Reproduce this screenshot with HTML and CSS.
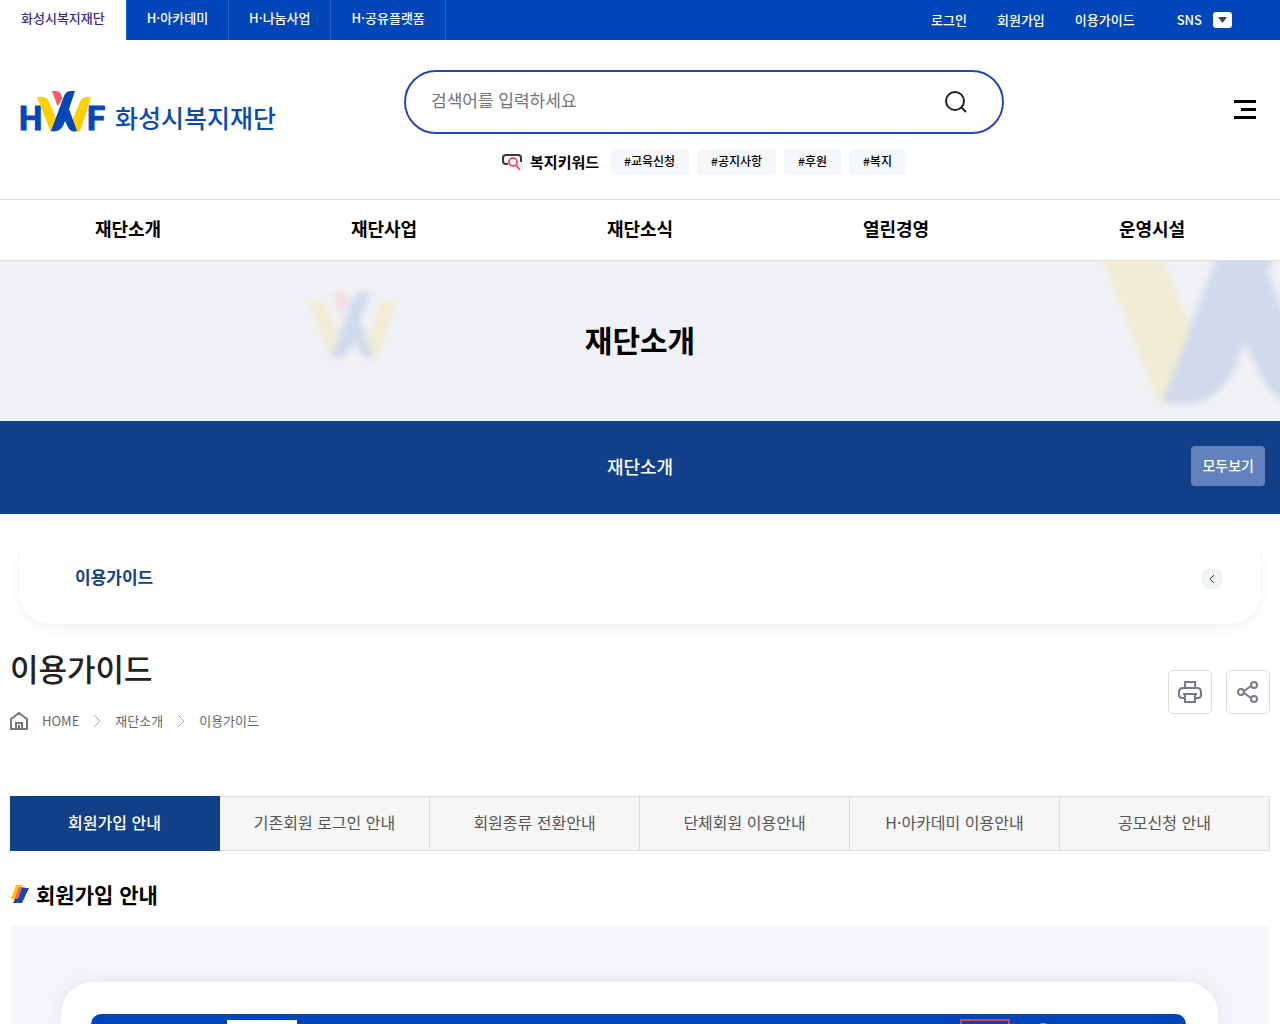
FILE: index.html
```
<!DOCTYPE html>
<html lang="ko">
<head>
    <meta charset="utf-8">
    <meta name="viewport" content="width=device-width, initial-scale=1">
    <title>이용가이드 | 화성시복지재단</title>
    <link rel="stylesheet" href="styles.css">
</head>
<body>
    <svg class="defs" aria-hidden="true">
        <symbol id="wing" viewBox="0 0 55 41">
            <path fill="#ffcf00" d="M0 6h5q5 0 7 5l8 19-5 11q-2-1-3-4z"/>
            <path fill="#ffcf00" d="M54 6h-4q-5 0-7 5l-8 19 5 11q3 0 4-3z"/>
            <path fill="#ff5a64" d="M15 0h4q5 0 6 6v2l-4 7q-1-1-2-4z"/>
            <path fill="#0546b8" d="M38 0h-4q-5 0-7 5L14 40q8 2 12-5l2-5 3 6q3 6 9 4L32 18z"/>
        </symbol>
    </svg>

    <div class="topbar">
        <nav class="sites">
            <a class="on" href="#">화성시복지재단</a>
            <a href="#">H·아카데미</a>
            <a href="#">H·나눔사업</a>
            <a href="#">H·공유플랫폼</a>
        </nav>
        <div class="member">
            <a href="#">로그인</a>
            <a href="#">회원가입</a>
            <a href="#">이용가이드</a>
            <button class="sns" type="button">SNS
                <svg width="19" height="16" viewBox="0 0 19 16"><rect width="19" height="16" rx="3" fill="#fff"/><path d="M5 5h9l-4.500 6z" fill="#444"/></svg>
            </button>
        </div>
    </div>

    <header class="header">
        <a class="logo" href="#">
            <svg width="86" height="54" viewBox="0 0 86 54" aria-label="HWF">
                <text class="logo-letter" x="-1" y="40">H</text>
                <text class="logo-letter" x="67" y="40">F</text>
                <use href="#wing" x="17" y="1" width="55" height="41"/>
            </svg>
            <span>화성시복지재단</span>
        </a>
        <div class="search">
            <form class="search-box">
                <input type="text" aria-label="검색어" placeholder="검색어를 입력하세요">
                <button type="button" aria-label="검색">
                    <svg width="24" height="24" viewBox="0 0 24 24" fill="none" stroke="#222" stroke-width="2"><circle cx="11" cy="11" r="9"/><path d="M17 17l5 5"/></svg>
                </button>
            </form>
            <div class="keywords">
                <svg width="20" height="18" viewBox="0 0 20 18" fill="none" stroke-width="2"><path stroke="#333846" d="M6 11H4q-3 0-3-3V5q0-3 3-3h12q3 0 3 3v4"/><circle cx="11" cy="9" r="4" stroke="#f0545c"/><path stroke="#f0545c" d="M14 12l4 5"/></svg>
                <strong>복지키워드</strong>
                <a href="#">#교육신청</a>
                <a href="#">#공지사항</a>
                <a href="#">#후원</a>
                <a href="#">#복지</a>
            </div>
        </div>
        <button class="menu" type="button" aria-label="전체메뉴">
            <svg width="22" height="20" viewBox="0 0 22 20"><path d="M0 1.500h22M7 9.500h15M0 17.500h22" stroke="#000" stroke-width="3"/></svg>
        </button>
    </header>

    <nav class="gnb">
        <a href="#">재단소개</a>
        <a href="#">재단사업</a>
        <a href="#">재단소식</a>
        <a href="#">열린경영</a>
        <a href="#">운영시설</a>
    </nav>

    <section class="visual">
        <svg class="mark-small" aria-hidden="true"><use href="#wing"/></svg>
        <svg class="mark-large" aria-hidden="true"><use href="#wing"/></svg>
        <h1>재단소개</h1>
    </section>

    <div class="depth">
        <span></span>
        <a href="#">재단소개</a>
        <button type="button">모두보기</button>
    </div>

    <main class="content">
        <div class="side-menu">
            <a href="#">이용가이드</a>
            <button type="button" aria-label="하위메뉴">
                <svg width="6" height="8" viewBox="0 0 6 8" fill="none" stroke="#444"><path d="M5 0L1 4l4 4"/></svg>
            </button>
        </div>

        <div class="title-row">
            <div>
                <h2>이용가이드</h2>
                <nav class="breadcrumb">
                    <svg width="18" height="18" viewBox="0 0 18 18" fill="none" stroke="#777" stroke-width="2"><path d="M1 17V7l8-6 8 6v10zM6 17v-6h6v6M9 13v4"/></svg>
                    <a href="#">HOME</a>
                    <svg width="8" height="14" viewBox="0 0 8 14" fill="none" stroke="#aaa"><path d="M1 1l6 6-6 6"/></svg>
                    <a href="#">재단소개</a>
                    <svg width="8" height="14" viewBox="0 0 8 14" fill="none" stroke="#aaa"><path d="M1 1l6 6-6 6"/></svg>
                    <a href="#">이용가이드</a>
                </nav>
            </div>
            <div class="tools">
                <button type="button" aria-label="인쇄">
                    <svg width="24" height="24" viewBox="0 0 24 24" fill="none" stroke="#747b8a" stroke-width="2"><path d="M7 8V2h10v6M6 18H4q-3 0-3-3v-3q0-4 4-4h14q4 0 4 4v3q0 3-3 3h-2M5 14h14M7 14v8h10v-8"/></svg>
                </button>
                <button type="button" aria-label="공유">
                    <svg width="24" height="24" viewBox="0 0 24 24" fill="none" stroke="#747b8a" stroke-width="2"><circle cx="5" cy="12" r="3"/><circle cx="18" cy="5" r="3"/><circle cx="18" cy="19" r="3"/><path d="M8 11l7-5M8 13l7 5"/></svg>
                </button>
            </div>
        </div>

        <nav class="tabs">
            <a class="on" href="#">회원가입 안내</a>
            <a href="#">기존회원 로그인 안내</a>
            <a href="#">회원종류 전환안내</a>
            <a href="#">단체회원 이용안내</a>
            <a href="#">H·아카데미 이용안내</a>
            <a href="#">공모신청 안내</a>
        </nav>

        <h3>
            <svg width="18" height="18" viewBox="0 0 18 18"><path d="M5 0h7L7 14H0z" fill="#ffc400"/><path d="M8 2h6L8 15H3z" fill="#f4645c"/><path d="M11 3h7l-7 15H2l2-4h3z" fill="#1746b4"/></svg>
            회원가입 안내
        </h3>

        <div class="guide">
            <div class="guide-card">
                <div class="guide-bar">
                    <span class="guide-tab"></span>
                    <span class="guide-point"></span>
                    <span class="guide-dot"></span>
                </div>
            </div>
        </div>
    </main>
</body>
</html>
```
FILE: styles.css
```
* {
    box-sizing: border-box;
}

body {
    margin: 0;
    min-height: 100vh;
    display: flex;
    flex-direction: column;
    background: #fff;
    color: #000;
    font-family: "Noto Sans CJK KR", sans-serif;
    font-size: 13px;
    line-height: 20px;
}

a {
    color: inherit;
    text-decoration: none;
}

button {
    padding: 0;
    border: 0;
    background: none;
    color: inherit;
    font: inherit;
    cursor: pointer;
}

svg {
    display: block;
    flex-shrink: 0;
}

h1, h2, h3 {
    margin: 0;
}

.defs {
    position: absolute;
    width: 0;
    height: 0;
}

/* top bar */
.topbar {
    display: flex;
    justify-content: space-between;
    height: 40px;
    background: #0046b8;
    color: #fff;
    font-weight: 500;
}

.sites {
    display: flex;
}

.sites a {
    padding: 8px 20px 0;
    border-right: 1px solid #2460c4;
}

.sites .on {
    padding-left: 21px;
    padding-right: 21px;
    background: #fff;
    color: #3c2a86;
}

.member {
    display: flex;
    align-items: center;
    gap: 30px;
    padding-right: 48px;
}

.sns {
    display: flex;
    align-items: center;
    gap: 11px;
    margin-left: 12px;
}

/* header */
.header {
    display: grid;
    grid-template-columns: 374px 600px 1fr;
    height: 159px;
    padding: 30px 24px 0 20px;
    column-gap: 10px;
}

.logo {
    display: flex;
    align-items: flex-start;
    gap: 9px;
    padding-top: 20px;
    color: #0b4bb0;
    font-size: 25px;
    font-weight: 500;
    line-height: 54px;
}

.logo-letter {
    fill: #0546b8;
    stroke: #0546b8;
    stroke-linejoin: round;
    font: bold 33px Roboto, sans-serif;
}

.search-box {
    display: flex;
    align-items: center;
    height: 64px;
    padding: 0 34px 0 25px;
    border: 2px solid #2447b5;
    border-radius: 32px;
}

.search-box input {
    flex: 1;
    padding: 0 0 4px;
    border: 0;
    outline: 0;
    background: none;
    font: inherit;
    font-size: 17px;
}

.search-box input::placeholder {
    color: #757575;
}

.keywords {
    display: flex;
    align-items: center;
    justify-content: center;
    gap: 8px;
    margin-top: 15px;
    font-size: 12px;
}

.keywords strong {
    margin-right: 3px;
    font-size: 15px;
}

.keywords a {
    padding: 2px 14px 4px;
    border-radius: 4px;
    background: #f5f8fa;
    font-weight: 500;
}

.menu {
    justify-self: end;
    align-self: start;
    margin-top: 30px;
}

.gnb {
    display: grid;
    grid-template-columns: repeat(5, 1fr);
    height: 62px;
    border-top: 1px solid #ddd;
    border-bottom: 1px solid #ddd;
    font-size: 18px;
    font-weight: 700;
    line-height: 56px;
    text-align: center;
}

/* visual */
.visual {
    position: relative;
    height: 160px;
    overflow: hidden;
    background: #f0f1f5;
    text-align: center;
}

.visual h1 {
    font-size: 30px;
    line-height: 156px;
}

.mark-small,
.mark-large {
    position: absolute;
    opacity: 0.13;
}

.mark-small {
    top: 28px;
    left: 308px;
    width: 90px;
    height: 72px;
    filter: blur(3px);
}

.mark-large {
    top: -96px;
    right: -124px;
    width: 324px;
    height: 244px;
    filter: blur(3px);
}

.depth {
    display: grid;
    grid-template-columns: 1fr auto 1fr;
    align-items: center;
    height: 93px;
    padding: 0 15px 4px;
    background: #113f88;
    color: #fff;
    font-size: 18px;
    font-weight: 500;
}

.depth button {
    justify-self: end;
    height: 40px;
    padding: 0 11px 2px;
    border-radius: 4px;
    background: #6382bd;
    font-size: 14px;
}

/* content */
.content {
    flex: 1;
    display: flex;
    flex-direction: column;
    padding: 16px 10px 0;
}

.side-menu {
    display: flex;
    align-items: center;
    justify-content: space-between;
    height: 94px;
    margin: 0 10px;
    padding: 0 38px 0 55px;
    border-radius: 30px;
    box-shadow: 0 4px 12px rgba(0, 0, 0, 0.06);
    color: #113f88;
    font-size: 17px;
    font-weight: 700;
}

.side-menu button {
    display: grid;
    place-items: center;
    width: 20px;
    height: 20px;
    margin-top: 4px;
    border-radius: 6px;
    background: #eff4f4;
}

.title-row {
    display: flex;
    align-items: center;
    justify-content: space-between;
    margin-top: 20px;
}

.title-row h2 {
    color: #222;
    font-size: 31px;
    font-weight: 500;
    line-height: 48px;
}

.breadcrumb {
    display: flex;
    align-items: center;
    gap: 14px;
    margin-top: 19px;
    color: #666;
}

.tools {
    display: flex;
    gap: 14px;
    margin-top: 8px;
}

.tools button {
    display: grid;
    place-items: center;
    width: 44px;
    height: 44px;
    border: 1px solid #ddd;
    border-radius: 5px;
}

.tabs {
    display: grid;
    grid-template-columns: repeat(6, 1fr);
    margin-top: 65px;
    color: #555;
    font-size: 16px;
    text-align: center;
}

.tabs a {
    height: 55px;
    border: 1px solid #ddd;
    border-left: 0;
    background: #f6f6f6;
    line-height: 51px;
}

.tabs .on {
    border-color: #113f88;
    background: #113f88;
    color: #fff;
    font-weight: 500;
}

.content h3 {
    display: flex;
    align-items: center;
    gap: 7px;
    margin: 27px 0 16px 1px;
    font-size: 21px;
    line-height: 32px;
}

/* sign-up screen preview */
.guide {
    flex: 1;
    display: flex;
    overflow: hidden;
    margin-left: 1px;
    padding: 56px 52px 0 50px;
    background: #f4f6f9;
}

.guide-card {
    flex: 1;
    padding: 32px 32px 0 30px;
    border-radius: 32px 32px 0 0;
    background: #fff;
    box-shadow: 0 0 20px rgba(0, 0, 0, 0.08);
}

.guide-bar {
    display: flex;
    align-items: flex-start;
    height: 10px;
    padding-left: 136px;
    border-radius: 12px 12px 0 0;
    background: #0046b8;
    overflow: hidden;
}

.guide-tab {
    width: 70px;
    height: 4px;
    margin-top: 6px;
    background: #fff;
}

.guide-point {
    width: 50px;
    height: 10px;
    margin: 5px 25px 0 auto;
    border: 2px solid #d8434f;
}

.guide-dot {
    width: 16px;
    height: 16px;
    margin: 9px 135px 0 0;
    border-radius: 50%;
    background: #7ea6e0;
}
```
